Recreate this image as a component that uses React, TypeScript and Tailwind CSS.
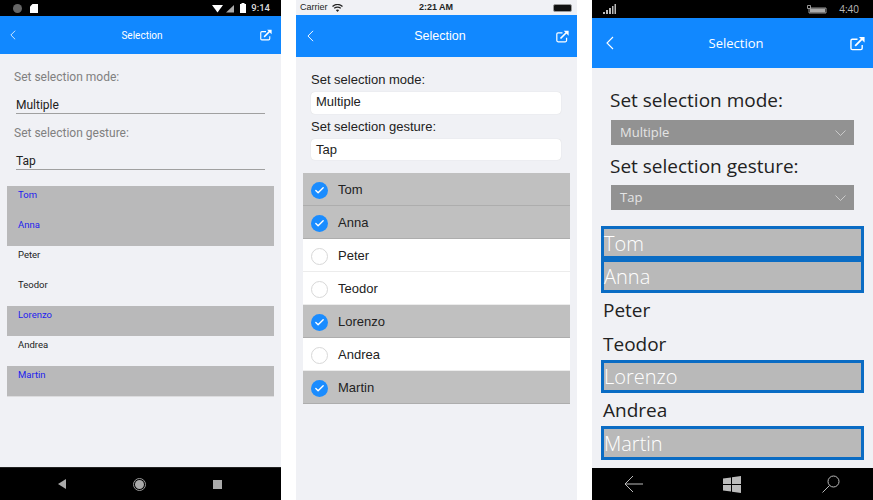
import { Check } from "lucide-react"

const NAMES = [
  { name: "Tom", selected: true },
  { name: "Anna", selected: true },
  { name: "Peter", selected: false },
  { name: "Teodor", selected: false },
  { name: "Lorenzo", selected: true },
  { name: "Andrea", selected: false },
  { name: "Martin", selected: true },
]

const ROBOTO = "font-['Roboto',sans-serif]"
const HELV = "font-['Liberation_Sans',sans-serif]"
const SEGOE = "font-['Open_Sans',sans-serif]"

function ShareIcon({ size }: { size: number }) {
  return (
    <svg width={size} height={size} viewBox="0 0 16 16" fill="none" stroke="#fff" strokeWidth="1.5">
      <path d="M13 9.500v3.500a1.500 1.500 0 0 1-1.500 1.500h-9A1.500 1.500 0 0 1 1 13V5a1.500 1.500 0 0 1 1.500-1.500H8" />
      <path d="M5.500 10.500L13.500 2.500" strokeWidth="2" />
      <path d="M9.500 1h6v6z" fill="#fff" stroke="none" />
    </svg>
  )
}

function BackIcon({ w, h }: { w: number; h: number }) {
  return (
    <svg width={w} height={h} viewBox="0 0 8 14" fill="none" stroke="#fff" strokeWidth="1.100">
      <path d="M7 1L1 7l6 6" />
    </svg>
  )
}

function NavBar({ height, w, h, iconSize, px, titleClass }: { height: string; w: number; h: number; iconSize: number; px: string; titleClass: string }) {
  return (
    <div className={`flex items-center bg-[#1188ff] text-white ${height} ${px}`}>
      <BackIcon w={w} h={h} />
      <span className={`flex-1 text-center ${titleClass}`}>Selection</span>
      <ShareIcon size={iconSize} />
    </div>
  )
}

function AndroidPhone() {
  return (
    <div className={`flex h-[500px] w-[281px] flex-col bg-[#f0f1f5] ${ROBOTO}`}>
      <div className="flex h-[16px] items-center justify-between bg-black pl-[13px] pr-[11px]">
        <div className="flex items-center gap-[8px]">
          <div className="h-[9px] w-[9px] rounded-full bg-[#666]" />
          <svg width="8" height="9" viewBox="0 0 8 9">
            <path d="M2.500 0H8v9H0V2.500z" fill="#fff" />
          </svg>
        </div>
        <div className="flex items-center text-[9.500px] text-[#ddd]">
          <svg width="23" height="9" viewBox="0 0 23 9">
            <path d="M0 1h11L5.500 8.500z" fill="#fff" />
            <path d="M14 8.500l8-7.500v7.500z" fill="#aaa" />
          </svg>
          <svg width="6" height="10" viewBox="0 0 6 10" className="ml-[5px]">
            <path d="M0 1h1.500V0h3v1H6v9H0z" fill="#fff" />
          </svg>
          <span className="ml-[5px] font-medium">9:14</span>
        </div>
      </div>
      <NavBar height="h-[38px]" w={6} h={10} iconSize={12} px="pl-[10px] pr-[9px]" titleClass="pl-[8px] text-[10px]" />
      <div className="flex flex-1 flex-col">
        <div className="flex flex-col pl-[14px] pr-[16px] pt-[15px]">
          <span className="text-[12px] leading-[16px] text-[#808080]">Set selection mode:</span>
          <div className="ml-[2px] mt-[8px] h-[21px] border-b border-[#a0a0a0] text-[12px] leading-[24px] text-[#222]">Multiple</div>
          <span className="mt-[11px] text-[12px] leading-[16px] text-[#808080]">Set selection gesture:</span>
          <div className="ml-[2px] mt-[8px] h-[21px] border-b border-[#a0a0a0] text-[12px] leading-[24px] text-[#222]">Tap</div>
        </div>
        <div className="mx-[7px] mt-[16px] flex flex-col">
          {NAMES.map(({ name, selected }) => (
            <div
              key={name}
              className={`h-[30px] pl-[11px] pt-[3px] text-[9.500px] leading-[12px] ${selected ? "bg-[#b9b9ba] text-[#2222ee]" : "text-[#222]"}`}
            >
              {name}
            </div>
          ))}
        </div>
        <div className="mx-[7px] h-px bg-[#dcdcde]" />
      </div>
      <div className="flex h-[33px] items-center border-t border-[#222] bg-black pl-[58px]">
        <svg width="8" height="10" viewBox="0 0 8 10" className="mr-[67px]">
          <path d="M8 0v10L0 5z" fill="#aaa" />
        </svg>
        <div className="mr-[67px] flex h-[13px] w-[13px] items-center justify-center rounded-full border border-[#999]">
          <div className="h-[9px] w-[9px] rounded-full bg-[#aaa]" />
        </div>
        <div className="h-[9px] w-[9px] bg-[#aaa]" />
      </div>
    </div>
  )
}

function IosPhone() {
  return (
    <div className={`flex h-[500px] w-[281px] flex-col bg-[#f0f1f5] ${HELV}`}>
      <div className="flex h-[15px] items-center justify-between pl-[4px] pr-[5px] text-[9px] text-[#222]">
        <div className="flex w-[60px] items-center gap-[4px]">
          <span>Carrier</span>
          <svg width="11" height="8" viewBox="0 0 11 8" fill="none" stroke="#222" strokeWidth="1.300">
            <path d="M0.500 2.500C3.500 0 7.500 0 10.500 2.500M2.200 4.300C4 3 7 3 8.800 4.300" />
            <path d="M5.500 8L3.800 6C4.800 5.300 6.200 5.300 7.200 6z" fill="#222" stroke="none" />
          </svg>
        </div>
        <span className="font-bold">2:21 AM</span>
        <div className="flex w-[60px] justify-end">
          <div className="h-[8px] w-[19px] rounded-[2px] border border-[#999] bg-[#111]" />
        </div>
      </div>
      <NavBar height="h-[42px]" w={7} h={12} iconSize={13} px="pl-[11px] pr-[8px]" titleClass="pl-[10px] text-[12.500px]" />
      <div className="flex flex-1 flex-col">
        <div className="flex flex-col pl-[15px] pr-[16px] pt-[15px]">
          <span className="text-[13px] leading-[16px] text-[#222]">Set selection mode:</span>
          <div className="mt-[4px] h-[22px] rounded-[4px] bg-white pl-[5px] text-[13px] leading-[20px] text-[#222] shadow-[0_0_1px_#ccc]">Multiple</div>
          <span className="mt-[3px] text-[13px] leading-[20px] text-[#222]">Set selection gesture:</span>
          <div className="mt-[2px] h-[21px] rounded-[4px] bg-white pl-[5px] text-[13px] leading-[21px] text-[#222] shadow-[0_0_1px_#ccc]">Tap</div>
        </div>
        <div className="mx-[7px] mt-[13px] flex flex-col">
          {NAMES.map(({ name, selected }) => (
            <div
              key={name}
              className={`flex h-[33px] items-center gap-[10px] border-b pl-[8px] pt-[2px] text-[13px] text-[#222] ${selected ? "border-[#adadad] bg-[#c0c0c0]" : "border-[#ececec] bg-white"}`}
            >
              {selected ? (
                <div className="flex h-[17px] w-[17px] items-center justify-center rounded-full bg-[#1a8cff] text-white">
                  <Check size={11} strokeWidth={3} />
                </div>
              ) : (
                <div className="h-[17px] w-[17px] rounded-full border border-[#d8d8d8] bg-white" />
              )}
              <span>{name}</span>
            </div>
          ))}
        </div>
      </div>
    </div>
  )
}

function Chevron() {
  return (
    <svg width="11" height="6" viewBox="0 0 11 6" fill="none" stroke="#d8d8d8" strokeWidth="0.800">
      <path d="M0.500 0.500L5.500 5.500l5-5" />
    </svg>
  )
}

function UwpPhone() {
  return (
    <div className={`flex h-[500px] w-[281px] flex-col bg-[#f0f1f5] ${SEGOE}`}>
      <div className="flex h-[18px] items-center justify-between bg-black pl-[11px] pr-[14px]">
        <svg width="13" height="10" viewBox="0 0 13 10">
          <path d="M0 8h2v2H0zM3 6h2v4H3zM6 4h2v6H6zM9 2h1.500v8H9zM11.500 0H13v10h-1.500z" fill="#bbb" />
        </svg>
        <div className="flex items-center gap-[12px] text-[10px] text-[#bbb]">
          <svg width="20" height="9" viewBox="0 0 20 9" fill="none">
            <path d="M0.500 0.500h3v3h-3z" stroke="#bbb" strokeWidth="0.800" />
            <path d="M2 3.500V8h17V3H3" stroke="#bbb" strokeWidth="0.800" />
            <path d="M3 3.500h15v4H3z" fill="#aaa" />
          </svg>
          <span>4:40</span>
        </div>
      </div>
      <NavBar height="h-[50px]" w={8} h={14} iconSize={15} px="pl-[14px] pr-[8px]" titleClass="pl-[8px] pt-[2px] text-[13px]" />
      <div className="flex flex-1 flex-col">
        <div className="flex flex-col pl-[18px] pr-[19px] pt-[20px]">
          <span className="text-[19px] leading-[24px] text-[#222]">Set selection mode:</span>
          <div className="ml-px mt-[8px] flex h-[25px] items-center justify-between bg-[#929292] pl-[9px] pr-[8px] text-[13px] text-[#e4e4e4]">
            <span>Multiple</span>
            <Chevron />
          </div>
          <span className="mt-[9px] text-[19px] leading-[24px] text-[#222]">Set selection gesture:</span>
          <div className="ml-px mt-[7px] flex h-[25px] items-center justify-between bg-[#929292] pl-[9px] pr-[8px] text-[13px] text-[#e4e4e4]">
            <span>Tap</span>
            <Chevron />
          </div>
        </div>
        <div className="mx-[9px] mt-[16px] flex flex-col">
          {NAMES.map(({ name, selected }) => (
            <div
              key={name}
              className={`flex h-[33.400px] items-center pt-[2px] ${selected ? "border-[3px] border-[#0a6cc4] bg-[#b9b9b9] text-[20px] font-light text-white" : "pl-[2px] text-[19px] text-[#222]"}`}
            >
              {name}
            </div>
          ))}
        </div>
      </div>
      <div className="flex h-[32px] items-center bg-black pl-[32px]">
        <svg width="19" height="18" viewBox="0 0 19 18" fill="none" stroke="#bbb" strokeWidth="1">
          <path d="M19 9H1M9 1L1 9l8 8" />
        </svg>
        <svg width="18" height="17" viewBox="0 0 18 17" className="ml-[80px]">
          <path d="M0 2.500l8-1.100V8H0zM9 1.300L18 0v8H9zM0 9h8v6.600L0 14.500zM9 9h9v8l-9-1.300z" fill="#bbb" />
        </svg>
        <svg width="18" height="18" viewBox="0 0 18 18" fill="none" stroke="#bbb" strokeWidth="1" className="ml-[81px]">
          <circle cx="11.500" cy="6.500" r="5.500" />
          <path d="M7.500 10.500L0.500 17.500" />
        </svg>
      </div>
    </div>
  )
}

export default function App() {
  return (
    <div className="flex h-[500px] w-[873px] justify-between overflow-hidden bg-white">
      <AndroidPhone />
      <IosPhone />
      <UwpPhone />
    </div>
  )
}
